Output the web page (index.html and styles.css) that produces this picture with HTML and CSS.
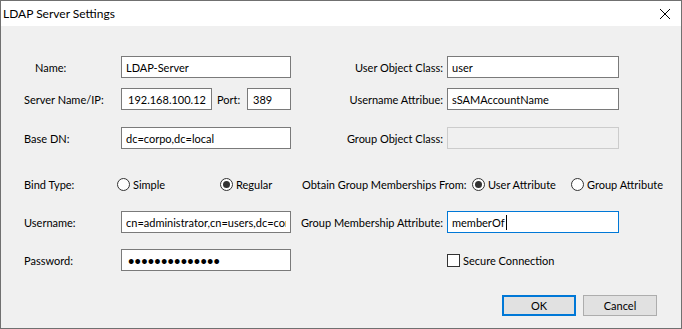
FILE: index.html
```html
<!DOCTYPE html>
<html lang="en">
<head>
    <meta charset="UTF-8">
    <title>LDAP Server Settings</title>
    <link rel="stylesheet" href="styles.css">
</head>
<body>
    <div class="window">
        <div class="titlebar">
            <span class="title">LDAP Server Settings</span>
            <svg class="close" width="12" height="12" viewBox="0 0 12 12">
                <path d="M1 1 L11 11 M11 1 L1 11" stroke="#000" stroke-width="1" fill="none"/>
            </svg>
        </div>

        <div class="content">
            <div class="row r1">
                <div class="left">
                    <label class="lbl indent">Name:</label>
                    <input class="field wide" type="text" value="LDAP-Server">
                </div>
                <div class="right">
                    <label class="rlbl">User Object Class:</label>
                    <input class="field rwide" type="text" value="user">
                </div>
            </div>

            <div class="row r2">
                <div class="left">
                    <label class="lbl">Server Name/IP:</label>
                    <input class="field ip" type="text" value="192.168.100.12">
                    <label class="port-lbl">Port:</label>
                    <input class="field port" type="text" value="389">
                </div>
                <div class="right">
                    <label class="rlbl">Username Attribue:</label>
                    <input class="field rwide" type="text" value="sSAMAccountName">
                </div>
            </div>

            <div class="row r3">
                <div class="left">
                    <label class="lbl">Base DN:</label>
                    <input class="field wide" type="text" value="dc=corpo,dc=local">
                </div>
                <div class="right">
                    <label class="rlbl">Group Object Class:</label>
                    <input class="field rwide" type="text" value="" disabled>
                </div>
            </div>

            <div class="row r4">
                <div class="left">
                    <label class="lbl short">Bind Type:</label>
                    <span class="option simple"><span class="radio"></span>Simple</span>
                    <span class="option"><span class="radio checked"></span>Regular</span>
                </div>
                <div class="right">
                    <label class="olbl">Obtain Group Memberships From:</label>
                    <span class="option user-attr"><span class="radio checked"></span>User Attribute</span>
                    <span class="option"><span class="radio"></span>Group Attribute</span>
                </div>
            </div>

            <div class="row r5">
                <div class="left">
                    <label class="lbl">Username:</label>
                    <input class="field wide" type="text" value="cn=administrator,cn=users,dc=corpo,dc=local">
                </div>
                <div class="right">
                    <label class="rlbl">Group Membership Attribute:</label>
                    <div class="field rwide focused">memberOf<span class="caret"></span></div>
                </div>
            </div>

            <div class="row r6">
                <div class="left">
                    <label class="lbl">Password:</label>
                    <input class="field wide pass" type="password" value="12345678901234">
                </div>
                <div class="right">
                    <span class="rspace"></span>
                    <span class="option"><span class="check"></span>Secure Connection</span>
                </div>
            </div>

            <div class="buttons">
                <button class="btn default">OK</button>
                <button class="btn">Cancel</button>
            </div>
        </div>
    </div>
</body>
</html>
```

FILE: styles.css
```css
body {
    margin: 0;
    font-family: Lato, "Open Sans", sans-serif;
    font-size: 11px;
    color: #000;
}
.window {
    width: 682px;
    height: 329px;
    box-sizing: border-box;
    border: 1px solid #707070;
    display: flex;
    flex-direction: column;
    background: #f0f0f0;
}
.titlebar {
    height: 25px;
    background: #fff;
    display: flex;
    align-items: center;
    justify-content: space-between;
    padding: 0 10px 0 2px;
}
.title {
    font-size: 12px;
}
.content {
    flex: 1;
    display: flex;
    flex-direction: column;
    padding-left: 23px;
}
.row {
    height: 22px;
    display: flex;
    align-items: center;
    white-space: nowrap;
}
.r1 { margin-top: 30px; }
.r2 { margin-top: 10px; }
.r3 { margin-top: 17px; }
.r4 { margin-top: 24px; }
.r5 { margin-top: 16px; }
.r6 { margin-top: 16px; }

.left {
    width: 267px;
    display: flex;
    align-items: center;
}
.right {
    display: flex;
    align-items: center;
}
.lbl {
    width: 97px;
    box-sizing: border-box;
}
.lbl.short { width: 93px; }
.indent { padding-left: 11px; }
.rlbl {
    width: 152px;
    margin-right: 4px;
    text-align: right;
}
.olbl {
    padding-left: 11px;
    width: 181px;
    box-sizing: border-box;
}
.rspace { width: 156px; }

.field {
    height: 22px;
    box-sizing: border-box;
    border: 1px solid #7a7a7a;
    background: #fff;
    font-family: Lato, "Open Sans", sans-serif;
    font-size: 11px;
    color: #000;
    padding: 0 4px;
    margin: 0;
    outline: none;
}
.wide { width: 170px; }
.rwide { width: 172px; }
.ip { width: 91px; padding: 0 2px 0 6px; }
.port { width: 44px; padding-left: 5px; }
.port-lbl {
    width: 35px;
    padding-left: 5px;
    box-sizing: border-box;
}
.field:disabled {
    background: #f0f0f0;
    border-color: #cccccc;
}
.pass {
    font-size: 11px;
    font-weight: bold;
    letter-spacing: 0.2px;
    padding-left: 6px;
}
.focused {
    border-color: #0078d7;
    display: flex;
    align-items: center;
}
.caret {
    display: inline-block;
    width: 1px;
    height: 15px;
    background: #000;
    margin-left: 1px;
}

.option {
    display: flex;
    align-items: center;
    gap: 3px;
}
.simple { width: 103px; }
.user-attr { width: 99px; }
.radio {
    width: 13px;
    height: 13px;
    box-sizing: border-box;
    border: 1px solid #333;
    border-radius: 50%;
    background: #fff;
    display: flex;
    align-items: center;
    justify-content: center;
}
.radio.checked::after {
    content: "";
    width: 7px;
    height: 7px;
    border-radius: 50%;
    background: #333;
}
.check {
    width: 13px;
    height: 13px;
    box-sizing: border-box;
    border: 1px solid #333;
    background: #fff;
}

.buttons {
    margin-top: 24px;
    display: flex;
    justify-content: flex-end;
    gap: 7px;
    padding-right: 24px;
}
.btn {
    width: 74px;
    height: 21px;
    box-sizing: border-box;
    background: #e1e1e1;
    border: 1px solid #adadad;
    font-family: Lato, "Open Sans", sans-serif;
    font-size: 11px;
    color: #000;
    padding: 0;
}
.btn.default {
    border: 2px solid #0078d7;
}
```
